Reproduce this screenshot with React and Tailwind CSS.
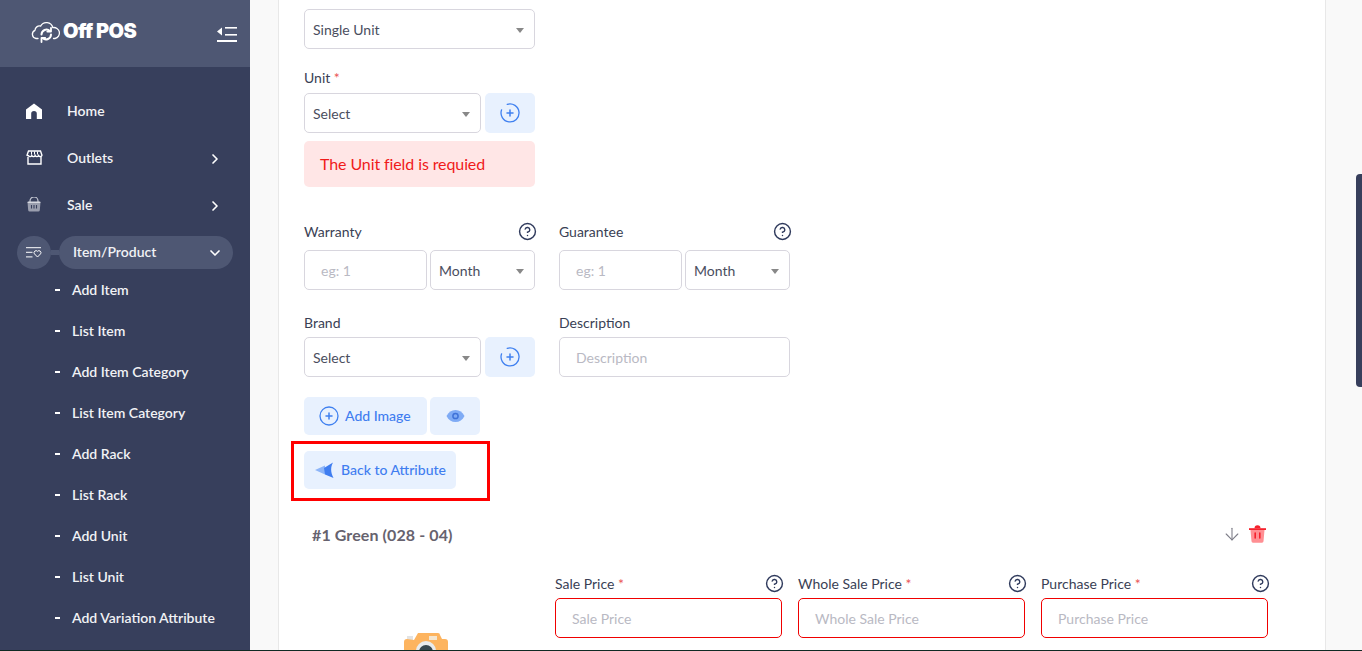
import React from "react";
import { ChevronRight, ChevronDown, CircleHelp, ArrowDown } from "lucide-react";

const Label = ({ children, req, help, className = "" }) => (
  <div className={`flex items-center justify-between h-5 text-[14px] text-[#3a3f55] ${className}`}>
    <span className="pb-0.5">{children}{req && <span className="text-[#ea5455]"> *</span>}</span>
    {help && <CircleHelp size={19} strokeWidth={1.8} className="text-[#2f3a5c] -mr-[2px] mb-px" />}
  </div>
);

const Select = ({ children, className = "" }) => (
  <div className={`h-10 border border-[#d8d6de] rounded-[5px] bg-white flex items-center justify-between pl-2 pr-[10px] text-[14px] text-[#4a4e5e] ${className}`}>
    <span>{children}</span>
    <span className="w-0 h-0 border-x-4 border-x-transparent border-t-[5px] border-t-[#888] mt-0.5" />
  </div>
);

const Input = ({ children, className = "", error }) => (
  <div className={`h-10 rounded-[5px] bg-white flex items-center pl-4 text-[14px] text-[#b9b9c3] border ${error ? "border-[#f00000]" : "border-[#d8d6de]"} ${className}`}>
    {children}
  </div>
);

const PlusCircle = ({ dashed }) => (
  <svg width="20" height="20" viewBox="0 0 20 20" fill="none" stroke="#3f80f0" strokeWidth="1.3" strokeLinecap="round">
    {dashed
      ? <path d="M7.2 1.4A9 9 0 1 1 1.6 6.8" />
      : <circle cx="10" cy="10" r="9" />}
    <path d="M10 7v6M7 10h6" strokeWidth="1.5" />
  </svg>
);

const AddBtn = () => (
  <div className="w-[50px] h-10 rounded-[5px] bg-[#e8f1fe] flex items-center justify-center">
    <PlusCircle dashed />
  </div>
);

const Home = () => (
  <svg width="18" height="18" viewBox="0 0 18 18" fill="#fff">
    <path d="M9 1.5 17 7.5V17h-5.2v-5.2a2.8 2.8 0 0 0-5.6 0V17H1V7.5Z" />
  </svg>
);
const Store = () => (
  <svg width="17" height="15" viewBox="0 0 17 15" fill="none" stroke="#fff" strokeWidth="1.4">
    <path d="M2.5 1h12l1.5 4.2a1.8 1.8 0 0 1-3.4.4 1.9 1.9 0 0 1-3.4 0 1.9 1.9 0 0 1-1.9 1 1.9 1.9 0 0 1-1.5-1 1.9 1.9 0 0 1-3.4 0A1.8 1.8 0 0 1 1 5.2Z" />
    <path d="M2 7v7h13V7" />
    <path d="M5.5 1.5v3M8.5 1.5v3M11.5 1.5v3" strokeWidth="1" />
  </svg>
);
const Basket = () => (
  <svg width="14" height="15" viewBox="0 0 14 15">
    <path d="M3 5V4a4 4 0 0 1 8 0v1" fill="none" stroke="#c6c9d4" strokeWidth="1.2" />
    <path d="M0.5 5h13l-.7 8.2a1.5 1.5 0 0 1-1.5 1.3H2.7a1.5 1.5 0 0 1-1.5-1.3Z" fill="#9a9eae" />
    <rect x="0.5" y="4.4" width="13" height="1.6" rx=".8" fill="#d5d7df" />
    <path d="M4.5 8v3.5M7 8v3.5M9.5 8v3.5" stroke="#373f5c" strokeWidth="1.1" />
  </svg>
);
const ListHeart = () => (
  <svg width="16" height="11" viewBox="0 0 16 11" fill="none" stroke="#fff" strokeWidth="1">
    <path d="M0 .7h15M0 5.3h6.5M0 9.9h6.5" />
    <path d="M11.5 10 8.4 6.8a2 2 0 0 1 3.1-2.5 2 2 0 0 1 3.1 2.5Z" />
  </svg>
);

const Logo = () => (
  <svg width="30" height="25" viewBox="0 0 30 25" fill="none" stroke="#fff" strokeWidth="1.3" strokeLinecap="round" strokeLinejoin="round">
    <path d="M7 17.5H5a4.3 4.3 0 0 1-1-8.2 4.5 4.5 0 0 1 5.6-4.2A6.6 6.6 0 0 1 21.8 6.6 5.5 5.5 0 0 1 24 17.5h-1.5" />
    <path d="M10.5 13.5a5 5 0 0 1 8.4-3.6" strokeWidth="2" />
    <path d="M20 6.8v3.7h-3.7" strokeWidth="1.8" />
    <path d="M20 13.5a5 5 0 0 1-8.4 3.6" strokeWidth="2" />
    <path d="M10.5 21v-4h3.7" strokeWidth="1.8" />
  </svg>
);

const Collapse = () => (
  <svg width="20" height="17" viewBox="0 0 20 17" fill="#fff">
    <path d="M0 6.5 5 2.5v8Z" />
    <rect x="8" y="2" width="12" height="1.6" />
    <rect x="8" y="9" width="12" height="1.6" />
    <rect x="0" y="15" width="20" height="2" />
  </svg>
);

const Send = () => (
  <svg width="20" height="17" viewBox="0 0 20 17">
    <path d="M0 8 10 3.5V12.5Z" fill="#8db5f8" />
    <path d="M9 6 18 0.5C15.5 5 15.5 10 18.5 16L10 12.5Z" fill="#3f7df0" />
  </svg>
);

const Eye = () => (
  <svg width="19" height="14" viewBox="0 0 19 14">
    <path d="M0.5 7C2.5 3 5.5 1 9.5 1s7 2 9 6c-2 4-5 6-9 6s-7-2-9-6Z" fill="#7fabf5" />
    <circle cx="9.5" cy="7" r="2.6" fill="none" stroke="#3f72d8" strokeWidth="1.5" />
  </svg>
);

const Trash = () => (
  <svg width="17" height="18" viewBox="0 0 17 18">
    <path d="M1.5 5h14l-1 11.3a1.5 1.5 0 0 1-1.5 1.4H4a1.5 1.5 0 0 1-1.5-1.4Z" fill="#ff8f93" />
    <rect x="0" y="3.2" width="17" height="1.8" fill="#f5222d" />
    <path d="M5.5 3.2a3 3 0 0 1 6 0Z" fill="#f5222d" />
    <path d="M6.2 8v5M10.8 8v5" stroke="#f5222d" strokeWidth="1.6" strokeLinecap="round" />
  </svg>
);

const Camera = () => (
  <svg width="44" height="34" viewBox="0 0 44 34">
    <rect x="3" y="3" width="6" height="8" fill="#e3e3e3" />
    <path d="M10 7 14 0h20a2 2 0 0 1 2 2l2 4h3a3 3 0 0 1 3 3v25H0V9a3 3 0 0 1 3-3Z" fill="#fdb45f" />
    <rect x="25" y="3" width="8" height="4" fill="#f5e6cf" />
    <circle cx="22" cy="18" r="10" fill="#e8ebed" />
    <circle cx="22" cy="19" r="7" fill="#37474f" />
  </svg>
);

const NavItem = ({ icon, label, arrow }) => (
  <div className="h-[47px] flex items-center pl-[25px] pr-[27px]">
    <span className="w-[18px] flex justify-center">{icon}</span>
    <span className="ml-6 flex-1 text-[14px] font-semibold text-[#f1f2f5]">{label}</span>
    {arrow && <ChevronRight size={16} strokeWidth={2.5} className="text-white mt-0.5" />}
  </div>
);

const subItems = ["Add Item", "List Item", "Add Item Category", "List Item Category", "Add Rack", "List Rack", "Add Unit", "List Unit", "Add Variation Attribute"];

const Sidebar = () => (
  <aside className="w-[250px] shrink-0 bg-[#373f5c] flex flex-col">
    <div className="h-[67px] shrink-0 bg-[#4e5773] flex items-center pl-[31px] pr-[13px]">
      <Logo />
      <span className="ml-[2px] flex-1 pb-[5px] text-[20px] leading-none font-black text-white tracking-[-0.6px] font-['Inter',sans-serif]">Off POS</span>
      <Collapse />
    </div>
    <nav className="pt-5 flex flex-col">
      <NavItem icon={<Home />} label="Home" />
      <NavItem icon={<Store />} label="Outlets" arrow />
      <NavItem icon={<Basket />} label="Sale" arrow />
      <div className="mt-2 h-[33px] flex items-center pl-[17px] pr-[17px]">
        <span className="w-[34px] h-[33px] rounded-full bg-[#4e5773] flex items-center justify-center shrink-0"><ListHeart /></span>
        <span className="w-2 h-[5px] bg-[#4e5773] shrink-0" />
        <div className="flex-1 h-[33px] rounded-full bg-[#4e5773] flex items-center pl-[14px] pr-[10px]">
          <span className="flex-1 pb-0.5 text-[14px] font-semibold text-[#f1f2f5]">Item/Product</span>
          <ChevronDown size={16} strokeWidth={2.5} className="text-white" />
        </div>
      </div>
      {subItems.map((s) => (
        <div key={s} className="h-[41px] shrink-0 flex items-center pl-[55px] text-[14px] font-semibold text-[#f1f2f5]">
          <span className="w-[5px] h-0.5 bg-white mr-3" />
          <span>{s}</span>
        </div>
      ))}
    </nav>
  </aside>
);

const Col = ({ children, className = "" }) => <div className={`w-[231px] ${className}`}>{children}</div>;

export default function App() {
  return (
    <div className="relative h-[651px] overflow-hidden flex flex-col bg-[#f9f9f9] font-['Lato','Liberation_Sans',sans-serif]">
      <div className="flex-1 min-h-0 flex overflow-hidden">
        <Sidebar />
        <main className="flex-1 pl-7 pr-[36px] overflow-hidden">
          <div className="h-[700px] bg-white border-x border-[#e8e8e8] pl-[25px] pr-[56px] pt-[9px]">
            <Col>
              <Select>Single Unit</Select>
              <Label req className="mt-[19px] mb-[5px]">Unit</Label>
              <div className="flex gap-1">
                <Select className="flex-1">Select</Select>
                <AddBtn />
              </div>
              <div className="mt-2 h-[46px] rounded-[5px] bg-[#ffe6e6] flex items-center pl-4 text-[16px] tracking-[-0.1px] text-[#f01a1a]">The Unit field is requied</div>
            </Col>

            <div className="mt-[35px] flex gap-6">
              <Col>
                <Label help className="mb-2">Warranty</Label>
                <div className="flex gap-[3px]">
                  <Input className="w-[123px]">eg: 1</Input>
                  <Select className="flex-1">Month</Select>
                </div>
              </Col>
              <Col>
                <Label help className="mb-2">Guarantee</Label>
                <div className="flex gap-[3px]">
                  <Input className="w-[123px]">eg: 1</Input>
                  <Select className="flex-1">Month</Select>
                </div>
              </Col>
            </div>

            <div className="mt-[23px] flex gap-6">
              <Col>
                <Label className="mb-1">Brand</Label>
                <div className="flex gap-1">
                  <Select className="flex-1">Select</Select>
                  <AddBtn />
                </div>
              </Col>
              <Col>
                <Label className="mb-1">Description</Label>
                <Input>Description</Input>
              </Col>
            </div>

            <div className="mt-5 flex gap-[3px]">
              <div className="w-[123px] h-[38px] rounded-[5px] bg-[#e8f1fe] flex items-center pl-[15px] gap-[6px] text-[14px] text-[#3f7df0] font-medium">
                <PlusCircle /><span className="pb-0.5">Add Image</span>
              </div>
              <div className="w-[50px] h-[38px] rounded-[5px] bg-[#e8f1fe] flex items-center justify-center"><Eye /></div>
            </div>

            <div className="relative mt-4 w-[152px] h-[38px] rounded-[5px] bg-[#e8f1fe] flex items-center pl-[11px] gap-[6px] text-[14px] text-[#3f7df0] font-medium">
              <Send /><span className="pb-0.5">Back to Attribute</span>
              <div className="absolute left-[-13px] top-[-10px] w-[199px] h-[60px] border-[3px] border-[#ff0000]" />
            </div>

            <div className="mt-[36px] pl-2 flex items-center justify-between h-5 pr-[3px]">
              <span className="text-[16px] font-bold tracking-[0.1px] text-[#66626e]">#1 Green (028 - 04)</span>
              <div className="flex items-center gap-[7px] -mt-0.5">
                <ArrowDown size={20} strokeWidth={1.3} className="text-[#7d7d88]" />
                <Trash />
              </div>
            </div>

            <div className="mt-[29px] flex">
              <div className="w-[251px] pt-[59px] flex justify-center pr-2"><Camera /></div>
              <div className="flex gap-4">
                {["Sale Price", "Whole Sale Price", "Purchase Price"].map((p) => (
                  <div key={p} className="w-[227px]">
                    <Label req help className="mb-[4px]">{p}</Label>
                    <Input error>{p}</Input>
                  </div>
                ))}
              </div>
            </div>
          </div>
        </main>
      </div>
      <div className="h-px shrink-0 bg-[#0f2a24]" />
      <div className="absolute right-0 top-[174px] w-[6px] h-[213px] rounded-l-[4px] bg-[#373f5c]" />
    </div>
  );
}
